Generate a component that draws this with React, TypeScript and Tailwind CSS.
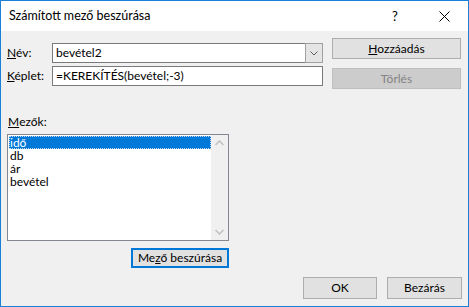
import React from "react";

const font = { fontFamily: '"Segoe UI", Lato, "Noto Sans", sans-serif' };

function Btn({ children, className = "" }: { children: React.ReactNode; className?: string }) {
  return (
    <div
      className={
        "flex items-center justify-center bg-[#e1e1e1] border border-[#adadad] text-[12px] text-black " + className
      }
    >
      {children}
    </div>
  );
}

export default function App() {
  return (
    <div
      className="w-[469px] h-[307px] border border-[#1a7fd6] bg-[#f0f0f0] flex flex-col overflow-hidden text-[12px] text-black leading-none"
      style={font}
    >
      {/* Title bar */}
      <div className="h-[30px] bg-white flex items-center shrink-0">
        <div className="pl-[8px] text-[12.5px] flex-1 pt-[1px]">Számított mező beszúrása</div>
        <div className="w-[46px] flex justify-center text-[13px] pr-[6px]">?</div>
        <div className="w-[46px] flex justify-center mr-[1px]">
          <svg width="11" height="11" viewBox="0 0 11 11">
            <path d="M0.5 0.5 L10.5 10.5 M10.5 0.5 L0.5 10.5" stroke="#000" strokeWidth="1" />
          </svg>
        </div>
      </div>

      {/* Body */}
      <div className="flex-1 flex flex-col pl-[6px] pt-[7px]">
        <div className="flex">
          <div className="w-[316px] pt-[5px] flex flex-col gap-[3px]">
            <div className="flex items-center h-[20px]">
              <div className="w-[45px]">
                <span className="underline">N</span>év:
              </div>
              <div className="flex-1 h-[20px] flex bg-white border border-[#7a7a7a]">
                <div className="flex-1 flex items-center pl-[3px]">bevétel2</div>
                <div className="w-[18px] h-[20px] -mt-[1px] -mr-[1px] bg-[#e5e5e5] border border-[#a0a0a0] flex items-center justify-center">
                  <svg width="8" height="5" viewBox="0 0 8 5">
                    <path d="M0.5 0.5 L4 4 L7.5 0.5" stroke="#606060" fill="none" strokeWidth="1" />
                  </svg>
                </div>
              </div>
            </div>
            <div className="flex items-center h-[20px]">
              <div className="w-[45px]">
                <span className="underline">K</span>éplet:
              </div>
              <div className="flex-1 h-[20px] flex items-center bg-white border border-[#7a7a7a] pl-[3px]">
                =KEREKÍTÉS(bevétel;-3)
              </div>
            </div>
          </div>
          <div className="ml-[9px] flex flex-col gap-[9px]">
            <Btn className="w-[129px] h-[21px]">
              <span>
                <span className="underline">H</span>ozzáadás
              </span>
            </Btn>
            <div className="w-[129px] h-[21px] flex items-center justify-center bg-[#cccccc] border border-[#bfbfbf] text-[#838383]">
              Törlés
            </div>
          </div>
        </div>

        <div className="mt-[27px] h-[12px] flex items-center pl-[1px]">
          <span className="underline">M</span>ezők:
        </div>
        <div className="mt-[6px] w-[222px] h-[107px] bg-white border border-[#828790] flex">
          <div className="flex-1 pt-[1px] pl-[1px] flex flex-col leading-[13px]">
            <div className="h-[13px] bg-[#0078d7] text-white flex items-center pl-[1px] outline-1 outline-dotted outline-[#c0d8f0] -outline-offset-1">
              idő
            </div>
            <div className="h-[13px] flex items-center pl-[1px]">db</div>
            <div className="h-[13px] flex items-center pl-[1px]">ár</div>
            <div className="h-[13px] flex items-center pl-[1px]">bevétel</div>
          </div>
          <div className="w-[17px] bg-[#f0f0f0] flex flex-col justify-between items-center py-[5px]">
            <svg width="9" height="6" viewBox="0 0 9 6">
              <path d="M0.5 5 L4.5 1 L8.5 5" stroke="#c0c0c0" fill="none" strokeWidth="1.5" />
            </svg>
            <svg width="9" height="6" viewBox="0 0 9 6">
              <path d="M0.5 1 L4.5 5 L8.5 1" stroke="#c0c0c0" fill="none" strokeWidth="1.5" />
            </svg>
          </div>
        </div>

        <div className="flex mt-[7px] pl-[124px]">
          <div className="w-[98px] h-[20px] flex items-center justify-center bg-[#e1e1e1] border-2 border-[#0078d7]">
            <span>
              Me<span className="underline">z</span>ő beszúrása
            </span>
          </div>
        </div>

        <div className="flex mt-[9px] pl-[296px] gap-[10px]">
          <Btn className="w-[74px] h-[22px]">OK</Btn>
          <Btn className="w-[75px] h-[22px]">Bezárás</Btn>
        </div>
      </div>
    </div>
  );
}
